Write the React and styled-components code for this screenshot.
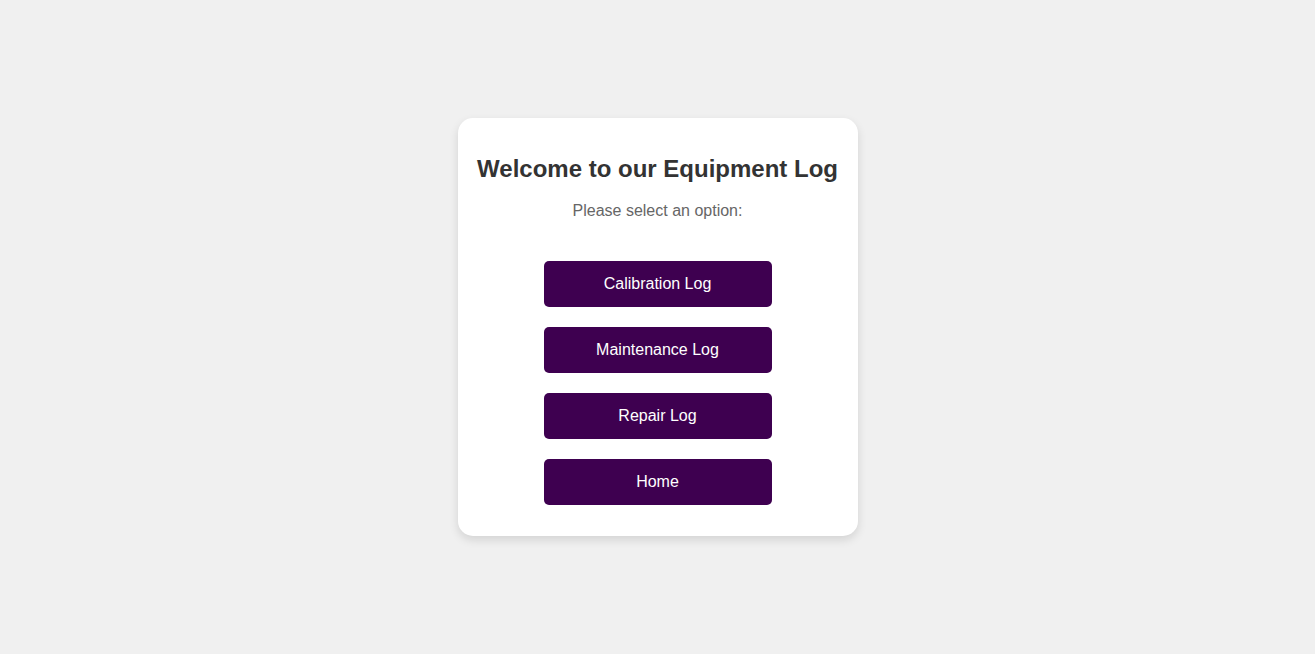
import React from 'react';
import styled, { createGlobalStyle } from 'styled-components';

const GlobalStyle = createGlobalStyle`
    html, body {
        margin: 0;
        padding: 0;
    }
    body {
        background: #f0f0f0;
        font-family: "Liberation Sans", Arial, sans-serif;
    }
`;

const Page = styled.div`
    display: flex;
    align-items: center;
    justify-content: center;
    height: 100vh;
`;

const Card = styled.div`
    box-sizing: border-box;
    width: 400px;
    padding: 20px 20px 31px;
    background: #fff;
    border-radius: 15px;
    box-shadow: 0 4px 10px rgba(0, 0, 0, 0.12);
    display: flex;
    flex-direction: column;
    align-items: center;
`;

const Title = styled.h1`
    margin: 17px 0 0;
    font-size: 24px;
    line-height: 28px;
    font-weight: bold;
    color: #333;
    white-space: nowrap;
`;

const Subtitle = styled.p`
    margin: 18px 0 0;
    font-size: 16px;
    line-height: 20px;
    color: #666;
`;

const Buttons = styled.div`
    display: flex;
    flex-direction: column;
    gap: 20px;
    margin-top: 40px;
`;

const LogButton = styled.button`
    width: 228px;
    height: 46px;
    border: none;
    border-radius: 5px;
    background: #3e0050;
    color: #fff;
    font-family: "Liberation Sans", Arial, sans-serif;
    font-size: 16px;
    cursor: pointer;
`;

const options = ['Calibration Log', 'Maintenance Log', 'Repair Log', 'Home'];

export default function App() {
    return (
        <Page>
            <GlobalStyle />
            <Card>
                <Title>Welcome to our Equipment Log</Title>
                <Subtitle>Please select an option:</Subtitle>
                <Buttons>
                    {options.map(label => (
                        <LogButton key={label}>{label}</LogButton>
                    ))}
                </Buttons>
            </Card>
        </Page>
    );
}
